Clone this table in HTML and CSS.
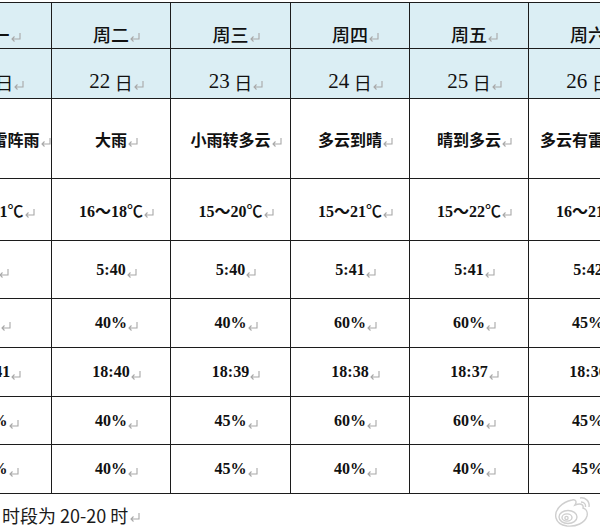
FILE: index.html
```html
<!DOCTYPE html>
<html lang="zh-CN">
<head>
<meta charset="utf-8">
<title>天气预报</title>
<link rel="stylesheet" href="styles.css">
</head>
<body>
<div class="page">
  <div class="grid">
    <div class="c h w">周一<span class="pm"><svg width="12" height="10" viewBox="0 0 12 10"><path d="M10 1V7H2M4.5 4.5L2 7L4.5 9.5"/></svg></span></div>
    <div class="c h w">周二<span class="pm"><svg width="12" height="10" viewBox="0 0 12 10"><path d="M10 1V7H2M4.5 4.5L2 7L4.5 9.5"/></svg></span></div>
    <div class="c h w">周三<span class="pm"><svg width="12" height="10" viewBox="0 0 12 10"><path d="M10 1V7H2M4.5 4.5L2 7L4.5 9.5"/></svg></span></div>
    <div class="c h w">周四<span class="pm"><svg width="12" height="10" viewBox="0 0 12 10"><path d="M10 1V7H2M4.5 4.5L2 7L4.5 9.5"/></svg></span></div>
    <div class="c h w">周五<span class="pm"><svg width="12" height="10" viewBox="0 0 12 10"><path d="M10 1V7H2M4.5 4.5L2 7L4.5 9.5"/></svg></span></div>
    <div class="c h w">周六<span class="pm"><svg width="12" height="10" viewBox="0 0 12 10"><path d="M10 1V7H2M4.5 4.5L2 7L4.5 9.5"/></svg></span></div>

    <div class="c h d"><span class="n">21</span>&nbsp;日<span class="pm"><svg width="12" height="10" viewBox="0 0 12 10"><path d="M10 1V7H2M4.5 4.5L2 7L4.5 9.5"/></svg></span></div>
    <div class="c h d"><span class="n">22</span>&nbsp;日<span class="pm"><svg width="12" height="10" viewBox="0 0 12 10"><path d="M10 1V7H2M4.5 4.5L2 7L4.5 9.5"/></svg></span></div>
    <div class="c h d"><span class="n">23</span>&nbsp;日<span class="pm"><svg width="12" height="10" viewBox="0 0 12 10"><path d="M10 1V7H2M4.5 4.5L2 7L4.5 9.5"/></svg></span></div>
    <div class="c h d"><span class="n">24</span>&nbsp;日<span class="pm"><svg width="12" height="10" viewBox="0 0 12 10"><path d="M10 1V7H2M4.5 4.5L2 7L4.5 9.5"/></svg></span></div>
    <div class="c h d"><span class="n">25</span>&nbsp;日<span class="pm"><svg width="12" height="10" viewBox="0 0 12 10"><path d="M10 1V7H2M4.5 4.5L2 7L4.5 9.5"/></svg></span></div>
    <div class="c h d"><span class="n">26</span>&nbsp;日<span class="pm"><svg width="12" height="10" viewBox="0 0 12 10"><path d="M10 1V7H2M4.5 4.5L2 7L4.5 9.5"/></svg></span></div>

    <div class="c b">多云有雷阵雨<span class="pm"><svg width="12" height="10" viewBox="0 0 12 10"><path d="M10 1V7H2M4.5 4.5L2 7L4.5 9.5"/></svg></span></div>
    <div class="c b">大雨<span class="pm"><svg width="12" height="10" viewBox="0 0 12 10"><path d="M10 1V7H2M4.5 4.5L2 7L4.5 9.5"/></svg></span></div>
    <div class="c b">小雨转多云<span class="pm"><svg width="12" height="10" viewBox="0 0 12 10"><path d="M10 1V7H2M4.5 4.5L2 7L4.5 9.5"/></svg></span></div>
    <div class="c b">多云到晴<span class="pm"><svg width="12" height="10" viewBox="0 0 12 10"><path d="M10 1V7H2M4.5 4.5L2 7L4.5 9.5"/></svg></span></div>
    <div class="c b">晴到多云<span class="pm"><svg width="12" height="10" viewBox="0 0 12 10"><path d="M10 1V7H2M4.5 4.5L2 7L4.5 9.5"/></svg></span></div>
    <div class="c b">多云有雷阵雨<span class="pm"><svg width="12" height="10" viewBox="0 0 12 10"><path d="M10 1V7H2M4.5 4.5L2 7L4.5 9.5"/></svg></span></div>

    <div class="c b">16～21<span class="deg">℃</span><span class="pm"><svg width="12" height="10" viewBox="0 0 12 10"><path d="M10 1V7H2M4.5 4.5L2 7L4.5 9.5"/></svg></span></div>
    <div class="c b">16～18<span class="deg">℃</span><span class="pm"><svg width="12" height="10" viewBox="0 0 12 10"><path d="M10 1V7H2M4.5 4.5L2 7L4.5 9.5"/></svg></span></div>
    <div class="c b">15～20<span class="deg">℃</span><span class="pm"><svg width="12" height="10" viewBox="0 0 12 10"><path d="M10 1V7H2M4.5 4.5L2 7L4.5 9.5"/></svg></span></div>
    <div class="c b">15～21<span class="deg">℃</span><span class="pm"><svg width="12" height="10" viewBox="0 0 12 10"><path d="M10 1V7H2M4.5 4.5L2 7L4.5 9.5"/></svg></span></div>
    <div class="c b">15～22<span class="deg">℃</span><span class="pm"><svg width="12" height="10" viewBox="0 0 12 10"><path d="M10 1V7H2M4.5 4.5L2 7L4.5 9.5"/></svg></span></div>
    <div class="c b">16～21<span class="deg">℃</span><span class="pm"><svg width="12" height="10" viewBox="0 0 12 10"><path d="M10 1V7H2M4.5 4.5L2 7L4.5 9.5"/></svg></span></div>

    <div class="c b">5:<span class="pm"><svg width="12" height="10" viewBox="0 0 12 10"><path d="M10 1V7H2M4.5 4.5L2 7L4.5 9.5"/></svg></span></div>
    <div class="c b">5:40<span class="pm"><svg width="12" height="10" viewBox="0 0 12 10"><path d="M10 1V7H2M4.5 4.5L2 7L4.5 9.5"/></svg></span></div>
    <div class="c b">5:40<span class="pm"><svg width="12" height="10" viewBox="0 0 12 10"><path d="M10 1V7H2M4.5 4.5L2 7L4.5 9.5"/></svg></span></div>
    <div class="c b">5:41<span class="pm"><svg width="12" height="10" viewBox="0 0 12 10"><path d="M10 1V7H2M4.5 4.5L2 7L4.5 9.5"/></svg></span></div>
    <div class="c b">5:41<span class="pm"><svg width="12" height="10" viewBox="0 0 12 10"><path d="M10 1V7H2M4.5 4.5L2 7L4.5 9.5"/></svg></span></div>
    <div class="c b">5:42<span class="pm"><svg width="12" height="10" viewBox="0 0 12 10"><path d="M10 1V7H2M4.5 4.5L2 7L4.5 9.5"/></svg></span></div>

    <div class="c b">40<span class="pm"><svg width="12" height="10" viewBox="0 0 12 10"><path d="M10 1V7H2M4.5 4.5L2 7L4.5 9.5"/></svg></span></div>
    <div class="c b">40%<span class="pm"><svg width="12" height="10" viewBox="0 0 12 10"><path d="M10 1V7H2M4.5 4.5L2 7L4.5 9.5"/></svg></span></div>
    <div class="c b">40%<span class="pm"><svg width="12" height="10" viewBox="0 0 12 10"><path d="M10 1V7H2M4.5 4.5L2 7L4.5 9.5"/></svg></span></div>
    <div class="c b">60%<span class="pm"><svg width="12" height="10" viewBox="0 0 12 10"><path d="M10 1V7H2M4.5 4.5L2 7L4.5 9.5"/></svg></span></div>
    <div class="c b">60%<span class="pm"><svg width="12" height="10" viewBox="0 0 12 10"><path d="M10 1V7H2M4.5 4.5L2 7L4.5 9.5"/></svg></span></div>
    <div class="c b">45%<span class="pm"><svg width="12" height="10" viewBox="0 0 12 10"><path d="M10 1V7H2M4.5 4.5L2 7L4.5 9.5"/></svg></span></div>

    <div class="c b">18:41<span class="pm"><svg width="12" height="10" viewBox="0 0 12 10"><path d="M10 1V7H2M4.5 4.5L2 7L4.5 9.5"/></svg></span></div>
    <div class="c b">18:40<span class="pm"><svg width="12" height="10" viewBox="0 0 12 10"><path d="M10 1V7H2M4.5 4.5L2 7L4.5 9.5"/></svg></span></div>
    <div class="c b">18:39<span class="pm"><svg width="12" height="10" viewBox="0 0 12 10"><path d="M10 1V7H2M4.5 4.5L2 7L4.5 9.5"/></svg></span></div>
    <div class="c b">18:38<span class="pm"><svg width="12" height="10" viewBox="0 0 12 10"><path d="M10 1V7H2M4.5 4.5L2 7L4.5 9.5"/></svg></span></div>
    <div class="c b">18:37<span class="pm"><svg width="12" height="10" viewBox="0 0 12 10"><path d="M10 1V7H2M4.5 4.5L2 7L4.5 9.5"/></svg></span></div>
    <div class="c b">18:36<span class="pm"><svg width="12" height="10" viewBox="0 0 12 10"><path d="M10 1V7H2M4.5 4.5L2 7L4.5 9.5"/></svg></span></div>

    <div class="c b">40%<span class="pm"><svg width="12" height="10" viewBox="0 0 12 10"><path d="M10 1V7H2M4.5 4.5L2 7L4.5 9.5"/></svg></span></div>
    <div class="c b">40%<span class="pm"><svg width="12" height="10" viewBox="0 0 12 10"><path d="M10 1V7H2M4.5 4.5L2 7L4.5 9.5"/></svg></span></div>
    <div class="c b">45%<span class="pm"><svg width="12" height="10" viewBox="0 0 12 10"><path d="M10 1V7H2M4.5 4.5L2 7L4.5 9.5"/></svg></span></div>
    <div class="c b">60%<span class="pm"><svg width="12" height="10" viewBox="0 0 12 10"><path d="M10 1V7H2M4.5 4.5L2 7L4.5 9.5"/></svg></span></div>
    <div class="c b">60%<span class="pm"><svg width="12" height="10" viewBox="0 0 12 10"><path d="M10 1V7H2M4.5 4.5L2 7L4.5 9.5"/></svg></span></div>
    <div class="c b">45%<span class="pm"><svg width="12" height="10" viewBox="0 0 12 10"><path d="M10 1V7H2M4.5 4.5L2 7L4.5 9.5"/></svg></span></div>

    <div class="c b">40%<span class="pm"><svg width="12" height="10" viewBox="0 0 12 10"><path d="M10 1V7H2M4.5 4.5L2 7L4.5 9.5"/></svg></span></div>
    <div class="c b">40%<span class="pm"><svg width="12" height="10" viewBox="0 0 12 10"><path d="M10 1V7H2M4.5 4.5L2 7L4.5 9.5"/></svg></span></div>
    <div class="c b">45%<span class="pm"><svg width="12" height="10" viewBox="0 0 12 10"><path d="M10 1V7H2M4.5 4.5L2 7L4.5 9.5"/></svg></span></div>
    <div class="c b">40%<span class="pm"><svg width="12" height="10" viewBox="0 0 12 10"><path d="M10 1V7H2M4.5 4.5L2 7L4.5 9.5"/></svg></span></div>
    <div class="c b">40%<span class="pm"><svg width="12" height="10" viewBox="0 0 12 10"><path d="M10 1V7H2M4.5 4.5L2 7L4.5 9.5"/></svg></span></div>
    <div class="c b">45%<span class="pm"><svg width="12" height="10" viewBox="0 0 12 10"><path d="M10 1V7H2M4.5 4.5L2 7L4.5 9.5"/></svg></span></div>
  </div>
  <p class="note">时段为 20-20 时<span class="pm pm-note"><svg width="12" height="10" viewBox="0 0 12 10"><path d="M10 1V7H2M4.5 4.5L2 7L4.5 9.5"/></svg></span></p>

  <svg class="watermark" width="60" height="40" viewBox="0 0 60 40">
    <g fill="none" stroke="#cfcfcf" stroke-width="1.4">
      <path d="M6 26C4 18 12 10 22 8C26 7 27 10 25 13C30 11 34 12 33 16C36 17 38 20 37 24C35 31 26 35 17 34C10 33 7 30 6 26Z"/>
      <ellipse cx="18" cy="25" rx="9" ry="6.5"/>
      <ellipse cx="17" cy="25.5" rx="5" ry="3.6"/>
      <circle cx="16.5" cy="26" r="1.6"/>
      <path d="M30 6C35 5 40 9 39 15"/>
      <path d="M31 10C34 10 36 12 35.5 15"/>
      <path d="M55 12C50 16 49 26 54 32"/>
    </g>
  </svg>
</div>
</body>
</html>
```

FILE: styles.css
```css
html, body {
  margin: 0;
  padding: 0;
  background: #ffffff;
}

.page {
  position: relative;
  width: 600px;
  height: 532px;
  overflow: hidden;
  background: #ffffff;
}

.grid {
  display: grid;
  grid-template-columns: 119px 118px 119px 118px 118px 118px;
  grid-template-rows: 45px 49px 79px 61px 57px 48px 48px 47px 48px;
  gap: 1px;
  padding: 1px;
  background: #1c1c1c;
  width: max-content;
  margin: 2px 0 0 -69px;
}

.c {
  display: flex;
  align-items: center;
  justify-content: center;
  background: #ffffff;
  color: #111111;
  white-space: nowrap;
}

.h {
  background: #dbeef4;
  padding-top: 16px;
  box-sizing: border-box;
}

.w {
  font-family: "Noto Sans CJK SC", sans-serif;
  font-size: 18px;
  font-weight: 500;
}

.d {
  font-family: "Liberation Serif", "Noto Sans CJK SC", serif;
  font-size: 18px;
}

.d .n {
  font-size: 21px;
}

.b {
  font-family: "Liberation Serif", "Noto Sans CJK SC", serif;
  font-size: 16px;
  font-weight: 700;
}

.deg {
  font-family: "Noto Sans CJK SC", sans-serif;
  font-weight: 500;
}

.pm {
  display: inline-block;
  width: 0;
  overflow: visible;
  align-self: center;
  margin-top: 6px;
}

.pm svg {
  display: block;
  fill: none;
  stroke: #a8a8a8;
  stroke-width: 1.1;
}

.note {
  margin: 8px 0 0 2px;
  font-family: "Noto Sans CJK SC", sans-serif;
  font-size: 18px;
  line-height: 26px;
  color: #1a1a1a;
  display: flex;
  align-items: center;
}

.pm-note {
  margin-top: 4px;
  margin-left: 1px;
}

.watermark {
  position: absolute;
  left: 550px;
  top: 492px;
}
```
